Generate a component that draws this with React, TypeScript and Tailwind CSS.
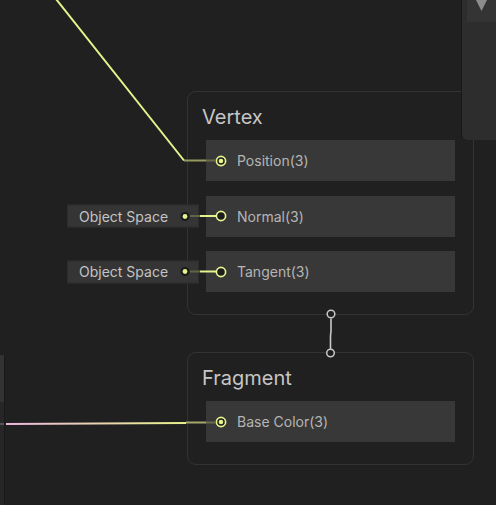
import React from "react";

const YELLOW = "#e6f28c";

function Port({ filled }: { filled?: boolean }) {
    return (
        <svg width="12" height="12" viewBox="0 0 12 12" className="shrink-0">
            <circle cx="6" cy="6" r="4.6" fill="#1e1e1e" stroke={YELLOW} strokeWidth="1.7" />
            {filled && <circle cx="6" cy="6" r="2.3" fill={YELLOW} />}
        </svg>
    );
}

function ObjectSpace() {
    return (
        <div className="absolute left-[-139px] top-1/2 -translate-y-1/2 w-[132px] h-[23px] bg-[#353535] border border-[#2b2b2b] flex items-center justify-between pl-[11px] pr-[8px]">
            <span className="text-[14px] text-[#c4c4c4] leading-none">Object Space</span>
            <svg width="10" height="10" viewBox="0 0 10 10">
                <circle cx="5" cy="5" r="4.5" fill="#1b1b1b" />
                <circle cx="5" cy="5" r="2.4" fill={YELLOW} />
            </svg>
        </div>
    );
}

function Row({ label, filled, space }: { label: string; filled?: boolean; space?: boolean }) {
    return (
        <div className="relative flex items-center h-[41px] bg-[#383838] pl-[9px] gap-[10px]">
            {space && <ObjectSpace />}
            <Port filled={filled} />
            <span className="text-[14px] text-[#b5b5b5]">{label}</span>
        </div>
    );
}

function Block({ title, pad, children }: { title: string; pad: string; children: React.ReactNode }) {
    return (
        <div className={`border border-[#333333] rounded-[9px] px-[18px] pt-[11px] flex flex-col ${pad}`}>
            <div className="text-[20px] leading-[28px] text-[#c6c6c6] -ml-[4px] mb-[9px]">{title}</div>
            <div className="flex flex-col gap-[14.5px]">{children}</div>
        </div>
    );
}

export default function App() {
    return (
        <div className="relative w-[496px] h-[505px] overflow-hidden bg-[#202020] font-['Inter',sans-serif]">
            {/* left side panel peeking in */}
            <div className="absolute left-0 top-[355px] w-[5px] h-[150px] flex flex-col border-r border-[#191919]">
                <div className="h-[47px] bg-[#333333]" />
                <div className="flex-1 bg-[#262626]" />
            </div>

            {/* master stack */}
            <div className="absolute left-[187px] top-[91px] w-[287px] flex flex-col">
                <Block title="Vertex" pad="pb-[22px]">
                    <Row label="Position(3)" filled />
                    <Row label="Normal(3)" space />
                    <Row label="Tangent(3)" space />
                </Block>
                <div className="relative h-[37px]">
                    <svg className="absolute left-[137px] top-[-6px]" width="14" height="49" viewBox="0 0 14 49">
                        <path d="M7 9.5 L7 22 L6.5 27 L6.5 40" stroke="#c8c8c8" strokeWidth="1.6" fill="none" />
                        <circle cx="7" cy="5" r="3.8" fill="#1e1e1e" stroke="#c8c8c8" strokeWidth="1.5" />
                        <circle cx="6.5" cy="44" r="3.8" fill="#1e1e1e" stroke="#c8c8c8" strokeWidth="1.5" />
                    </svg>
                </div>
                <Block title="Fragment" pad="pb-[22px]">
                    <Row label="Base Color(3)" filled />
                </Block>
            </div>

            {/* wires */}
            <svg className="absolute inset-0 pointer-events-none" width="496" height="505">
                <defs>
                    <linearGradient id="bc" x1="5" y1="0" x2="186" y2="0" gradientUnits="userSpaceOnUse">
                        <stop offset="0" stopColor="#ecb6dc" />
                        <stop offset="1" stopColor="#e6f08a" />
                    </linearGradient>
                </defs>
                <polyline points="56,-1 184,160.5" stroke={YELLOW} strokeWidth="2" fill="none" />
                <line x1="184" y1="160.5" x2="206" y2="160.5" stroke="#979a5e" strokeWidth="2" />
                <line x1="206" y1="160.5" x2="216" y2="160.5" stroke="#6a6c4c" strokeWidth="2" />

                <line x1="190" y1="216" x2="200" y2="216" stroke="#626449" strokeWidth="2" />
                <line x1="200" y1="216" x2="216" y2="216" stroke={YELLOW} strokeWidth="2" />
                <line x1="190" y1="271.5" x2="200" y2="271.5" stroke="#626449" strokeWidth="2" />
                <line x1="200" y1="271.5" x2="216" y2="271.5" stroke={YELLOW} strokeWidth="2" />

                <line x1="0" y1="424" x2="4" y2="424" stroke="#555555" strokeWidth="2" />
                <line x1="6" y1="424" x2="186" y2="423" stroke="url(#bc)" strokeWidth="2" />
                <line x1="186" y1="422.5" x2="206" y2="422.5" stroke="#a5a86a" strokeWidth="2" />
                <line x1="206" y1="422.5" x2="216" y2="422.5" stroke="#6a6c4c" strokeWidth="2" />
            </svg>

            {/* right panel */}
            <div className="absolute right-0 top-0 w-[35px] h-[140px] bg-[#2d2d2d] rounded-bl-[6px] border-l border-[#181818] flex flex-col items-end">
                <div className="w-[29px] h-[22px] bg-[#343434] flex justify-center">
                    <svg width="11" height="11" viewBox="0 0 11 11">
                        <polygon points="0,0 11,0 5.5,11" fill="#8c8c8c" />
                    </svg>
                </div>
            </div>
        </div>
    );
}
